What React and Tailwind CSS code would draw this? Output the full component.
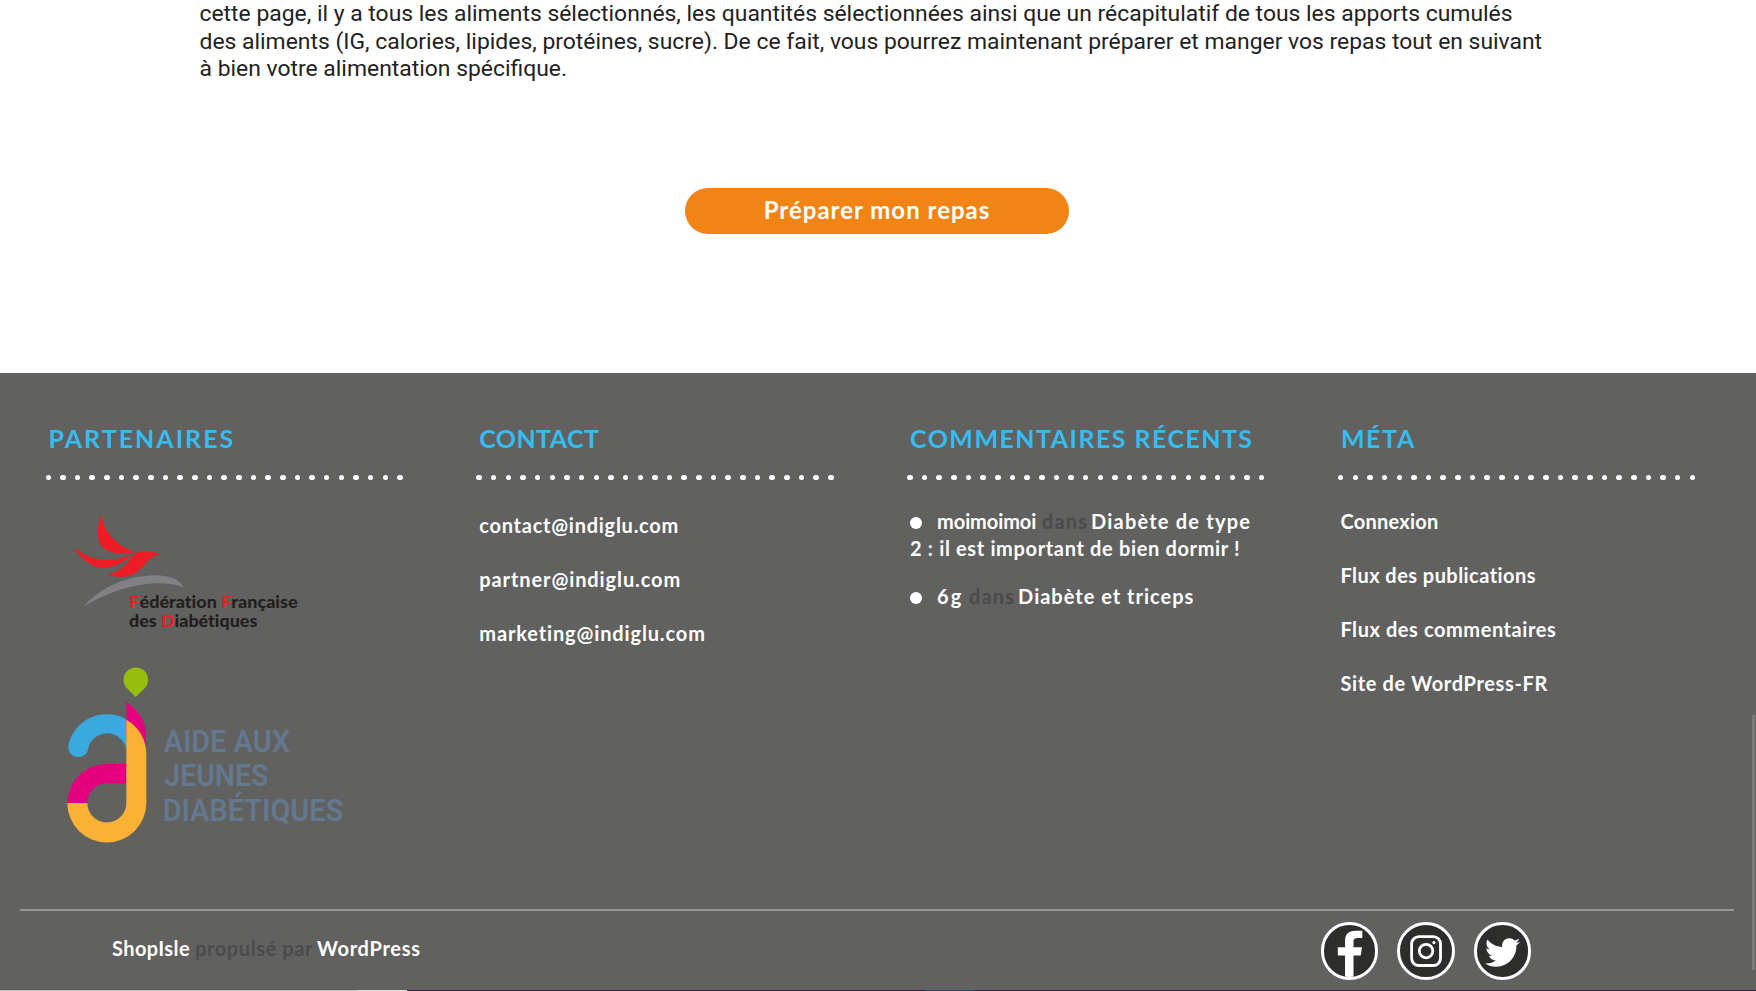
import { FaTwitter } from 'react-icons/fa';

function Column({ title, spacing, children }) {
  return (
    <section className="w-[430.8px] shrink-0">
      <h2 className={`pl-[3px] text-[25px] leading-[30px] font-bold text-[#35bdf2] ${spacing}`}>{title}</h2>
      <div className="mt-[21.5px] flex gap-[9.17px]">
        {Array.from({ length: 25 }, (_, i) => (
          <span key={i} className="h-[5.5px] w-[5.5px] shrink-0 rounded-full bg-white" />
        ))}
      </div>
      {children}
    </section>
  );
}

function FederationLogo() {
  return (
    <svg viewBox="54 285 800 385" className="block h-[128.3px] w-[266.7px] [font-variant-ligatures:none]" fontFamily="Lato, sans-serif" fontWeight="900" fontSize="51">
      <g fill="#ee1c24">
        <path d="M214 312C220 368 262 410 318 426C280 433 238 432 218 412C196 390 204 342 214 312Z" />
        <path d="M132 411C172 449 238 464 304 433C280 462 246 474 214 473C174 469 145 437 132 411Z" />
        <path d="M391 433C366 422 336 420 316 430C304 440 290 466 268 480C256 487 246 491 233 494C262 504 302 504 326 482C348 464 350 444 391 433Z" />
      </g>
      <path fill="#808184" d="M160 590C215 530 290 498 372 496C425 496 450 511 461 532C425 518 375 516 325 526C258 538 205 564 160 590Z" />
      <text x="298" y="595" fill="#231f20" textLength="505" lengthAdjust="spacingAndGlyphs">
        <tspan fill="#ee1c24">F</tspan>édération <tspan fill="#ee1c24">F</tspan>rançaise
      </text>
      <text x="297" y="651" fill="#231f20" textLength="385" lengthAdjust="spacingAndGlyphs">
        des <tspan fill="#ee1c24">D</tspan>iabétiques
      </text>
    </svg>
  );
}

function YouthLogo() {
  return (
    <svg viewBox="-6 20 900 560" className="block h-[186.7px] w-[300px] overflow-visible">
      <path fill="#96be0d" d="M257 125L231 99A37 37 0 1 1 284 99Z" />
      <path fill="#e4007e" d="M229 140C264 162 288 200 288 238V290L229 240Z" />
      <path fill="#3aa9de" d="M229 192A118 118 0 0 0 56 266C51 287 64 305 85 305C103 305 113 294 115 278A58 58 0 0 1 229 285Z" />
      <path fill="#e4007e" d="M229 326H170A118 118 0 0 0 52 443H112A58 58 0 0 1 170 384H229Z" />
      <path fill="#f9b233" d="M229 193A118 118 0 0 1 289 295V443A118 118 0 0 1 52 443H112A58 58 0 0 0 229 443Z" />
      <g fill="#64788f" fontFamily="Roboto, sans-serif" fontWeight="600" fontSize="94">
        <text x="341" y="290" textLength="379" lengthAdjust="spacingAndGlyphs">AIDE AUX</text>
        <text x="343" y="393" textLength="312" lengthAdjust="spacingAndGlyphs">JEUNES</text>
        <text x="338" y="496" textLength="542" lengthAdjust="spacingAndGlyphs">DIABÉTIQUES</text>
      </g>
    </svg>
  );
}

const badge = 'flex size-[57.5px] items-center justify-center overflow-hidden rounded-full border-[3px] border-white bg-[#2d2d2b]';

export default function App() {
  return (
    <div className="flex h-[991px] w-[1756px] flex-col overflow-hidden bg-white font-[Lato,sans-serif]">
      <main className="flex h-[373px] shrink-0 flex-col items-center">
        <p className="h-[84px] w-[1356px] self-start pl-[199.5px] font-[Roboto,sans-serif] text-[22.9px] leading-[27.5px] whitespace-nowrap text-[#222]">
          cette page, il y a tous les aliments sélectionnés, les quantités sélectionnées ainsi que un récapitulatif de tous les apports cumulés
          <br />
          des aliments (IG, calories, lipides, protéines, sucre). De ce fait, vous pourrez maintenant préparer et manger vos repas tout en suivant
          <br />
          à bien votre alimentation spécifique.
        </p>
        <button className="mt-[104px] mr-[2px] h-[46px] w-[384px] rounded-full bg-[#f28415] pb-[3px] text-2xl leading-none font-bold tracking-[1px] text-white">
          Préparer mon repas
        </button>
      </main>

      <footer className="flex h-[617px] shrink-0 bg-[#61615f] font-bold text-white">
        <div className="flex w-[1752px] flex-col">
          <div className="flex h-[536px] pt-[50px] pl-[45.5px] text-xl leading-[27px] whitespace-nowrap">
            <Column title="PARTENAIRES" spacing="tracking-[2px]">
              <div className="flex flex-col gap-[28.4px] pt-[25px] pl-[2.5px]">
                <FederationLogo />
                <YouthLogo />
              </div>
            </Column>
            <Column title="CONTACT" spacing="tracking-[0.4px]">
              <div className="flex flex-col gap-[27px] pt-8 pl-[3px]">
                <a className="tracking-[0.74px]">contact@indiglu.com</a>
                <a className="tracking-[0.9px]">partner@indiglu.com</a>
                <a className="tracking-[0.86px]">marketing@indiglu.com</a>
              </div>
            </Column>
            <Column title="COMMENTAIRES RÉCENTS" spacing="tracking-[1.45px]">
              <ul className="flex flex-col gap-[21px] pt-7 pl-[3px]">
                <li>
                  <div className="flex items-center">
                    <span className="mt-[3px] mr-[15px] size-3 rounded-full bg-white" />
                    <a className="w-[105px] tracking-[-0.1px]">moimoimoi</a>
                    <span className="w-[49px] tracking-[1.1px] text-[#4b4b4b]">dans</span>
                    <a className="tracking-[1.2px]">Diabète de type</a>
                  </div>
                  <a className="tracking-[0.65px]">2 : il est important de bien dormir !</a>
                </li>
                <li className="flex items-center">
                  <span className="mt-[3px] mr-[15px] size-3 rounded-full bg-white" />
                  <a className="w-[32px] tracking-[2px]">6g</a>
                  <span className="w-[49px] tracking-[1.1px] text-[#4b4b4b]">dans</span>
                  <a className="tracking-[1px]">Diabète et triceps</a>
                </li>
              </ul>
            </Column>
            <Column title="MÉTA" spacing="tracking-[1.6px]">
              <div className="flex flex-col gap-[27.1px] pt-7 pl-[2.5px]">
                <a className="tracking-[0.25px]">Connexion</a>
                <a className="tracking-[0.45px]">Flux des publications</a>
                <a className="tracking-[0.57px]">Flux des commentaires</a>
                <a className="tracking-[0.65px]">Site de WordPress-FR</a>
              </div>
            </Column>
          </div>
          <div className="mr-[18px] ml-5 flex h-[78px] justify-between border-t-2 border-[#979795] pr-[203px] pl-[92px]">
            <p className="flex pt-6 text-xl leading-[27px]">
              <a className="w-[83px] tracking-[0.4px]">ShopIsle</a>
              <span className="w-[122px] tracking-[0.6px] text-[#4b4b4b]">propulsé par</span>
              <a className="tracking-[0.7px]">WordPress</a>
            </p>
            <div className="flex gap-[19px] pt-[11px]">
              <a className={badge} aria-label="Facebook">
                <svg viewBox="66 69 164 164" className="size-full shrink-0" fill="#fff">
                  <path d="M133 240V166H110V140H133V120C133 98 145 87 165 87H188V110H172C164 110 160 114 160 122V140H187L183 166H160V240Z" />
                </svg>
              </a>
              <a className={badge} aria-label="Instagram">
                <svg viewBox="296 69 164 164" className="size-full shrink-0" fill="none" stroke="#fff" strokeWidth="9">
                  <rect x="333" y="106" width="92" height="92" rx="23" />
                  <circle cx="379" cy="152" r="21.5" />
                  <circle cx="404" cy="125" r="5" fill="#fff" stroke="none" />
                </svg>
              </a>
              <a className={badge} aria-label="Twitter">
                <FaTwitter className="mt-1 size-[35px] shrink-0" />
              </a>
            </div>
          </div>
        </div>
        <div className="mt-[342px] h-[255px] w-[2.5px] bg-[#7c7c7a]" />
      </footer>

      <div className="flex h-px shrink-0 bg-[#33263f]">
        <div className="w-[357px] bg-[#bdbdbb]" />
        <div className="w-[50px] bg-[#dededc]" />
        <div className="ml-[518px] w-[50px] bg-[#1f4a7c]" />
      </div>
    </div>
  );
}
